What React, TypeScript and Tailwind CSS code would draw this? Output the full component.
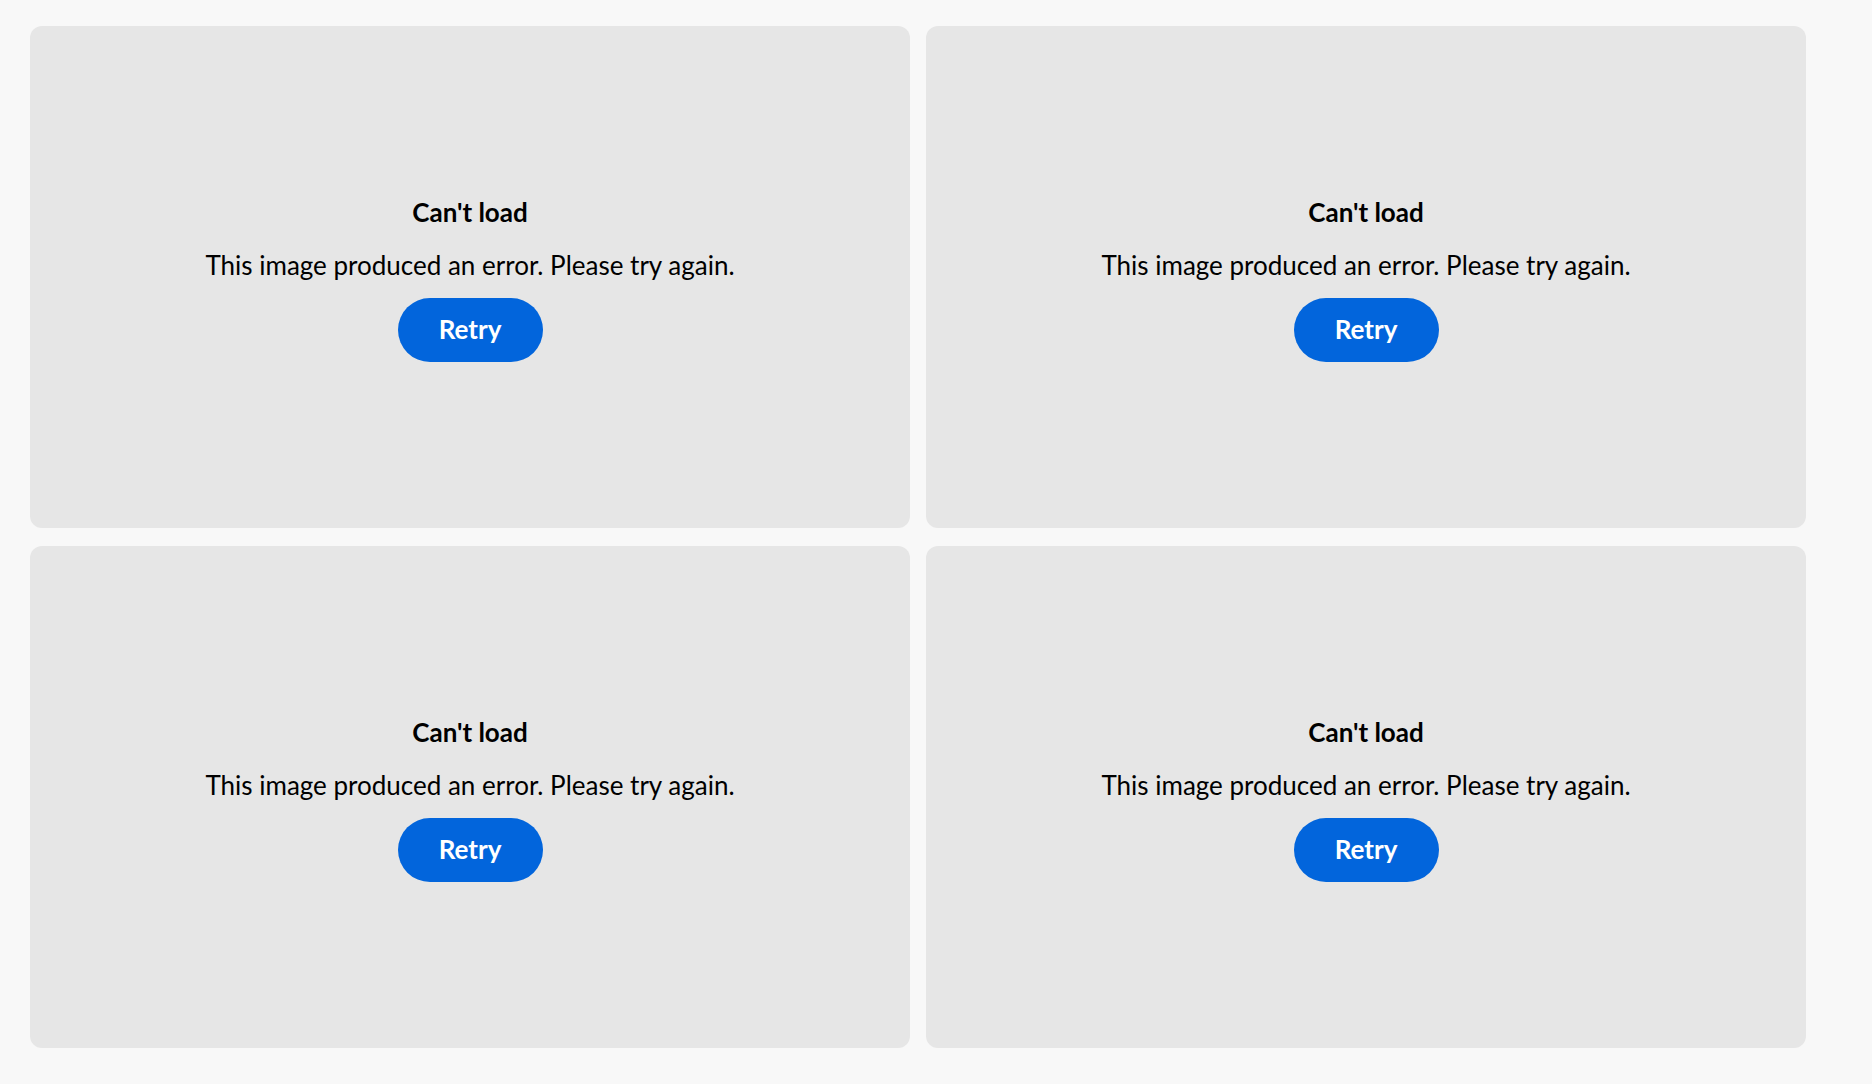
import React from 'react';

function ErrorCard() {
  return (
    <div className="h-[502px] rounded-xl bg-[#e6e6e6] flex flex-col items-center justify-center pt-[4px] text-black">
      <h2 className="text-[26px] leading-[30px] font-bold">Can't load</h2>
      <p className="mt-[23px] text-[26px] leading-[30px]">This image produced an error. Please try again.</p>
      <button className="mt-[18px] h-[64px] w-[145px] rounded-full bg-[#0265dc] text-white text-[26px] font-bold">
        Retry
      </button>
    </div>
  );
}

export default function App() {
  return (
    <div className="min-h-screen bg-[#f8f8f8] pl-[30px] pt-[26px]" style={{ fontFamily: 'Lato, "Noto Sans", sans-serif' }}>
      <div className="grid grid-cols-[880px_880px] gap-x-[16px] gap-y-[18px]">
        {[0, 1, 2, 3].map((i) => (
          <ErrorCard key={i} />
        ))}
      </div>
    </div>
  );
}
